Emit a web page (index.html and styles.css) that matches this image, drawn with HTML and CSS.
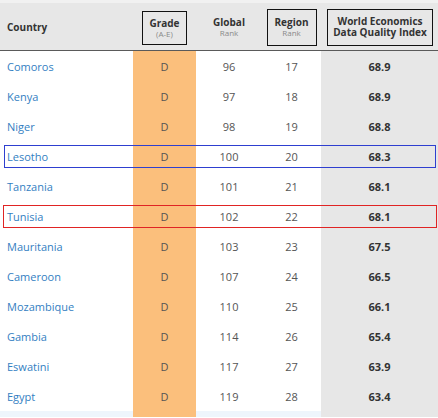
FILE: index.html
```html
<!DOCTYPE html>
<html>
<head>
<meta charset="utf-8">
<link rel="stylesheet" href="styles.css">
</head>
<body>
<div class="wrap">
<table class="rank">
  <colgroup>
    <col class="c-country"><col class="c-grade"><col class="c-global"><col class="c-region"><col class="c-index">
  </colgroup>
  <thead>
    <tr>
      <th class="th-country">Country</th>
      <th><span class="hbox hb-grade">Grade<small>(A-E)</small></span></th>
      <th><span class="hplain">Global<small>Rank</small></span></th>
      <th><span class="hbox hb-region">Region<small>Rank</small></span></th>
      <th><span class="hbox hb-index"><span class="ln">World Economics</span><span class="ln">Data Quality Index</span></span></th>
    </tr>
  </thead>
  <tbody>
    <tr><td class="country">Comoros</td><td class="grade">D</td><td>96</td><td>17</td><td class="score">68.9</td></tr>
    <tr><td class="country">Kenya</td><td class="grade">D</td><td>97</td><td>18</td><td class="score">68.9</td></tr>
    <tr><td class="country">Niger</td><td class="grade">D</td><td>98</td><td>19</td><td class="score">68.8</td></tr>
    <tr><td class="country">Lesotho</td><td class="grade">D</td><td>100</td><td>20</td><td class="score">68.3</td></tr>
    <tr><td class="country">Tanzania</td><td class="grade">D</td><td>101</td><td>21</td><td class="score">68.1</td></tr>
    <tr><td class="country">Tunisia</td><td class="grade">D</td><td>102</td><td>22</td><td class="score">68.1</td></tr>
    <tr><td class="country">Mauritania</td><td class="grade">D</td><td>103</td><td>23</td><td class="score">67.5</td></tr>
    <tr><td class="country">Cameroon</td><td class="grade">D</td><td>107</td><td>24</td><td class="score">66.5</td></tr>
    <tr><td class="country">Mozambique</td><td class="grade">D</td><td>110</td><td>25</td><td class="score">66.1</td></tr>
    <tr><td class="country">Gambia</td><td class="grade">D</td><td>114</td><td>26</td><td class="score">65.4</td></tr>
    <tr><td class="country">Eswatini</td><td class="grade">D</td><td>117</td><td>27</td><td class="score">63.9</td></tr>
    <tr><td class="country">Egypt</td><td class="grade">D</td><td>119</td><td>28</td><td class="score">63.4</td></tr>
    <tr class="next"><td></td><td class="grade"></td><td></td><td></td><td class="score"></td></tr>
  </tbody>
</table>
<div class="mark mark-blue"></div>
<div class="mark mark-red"></div>
</div>
</body>
</html>
```
FILE: styles.css
```css
html, body {
  margin: 0;
  padding: 0;
  background: #fff;
}
body {
  font-family: "Open Sans", "Noto Sans", sans-serif;
  width: 438px;
  height: 418px;
  overflow: hidden;
}
.wrap {
  position: relative;
  width: 438px;
}
.rank {
  border-collapse: collapse;
  table-layout: fixed;
  width: 438px;
}
.c-country { width: 133px; }
.c-grade { width: 63px; }
.c-global { width: 66px; }
.c-region { width: 59px; }
.c-index { width: 117px; }

thead tr {
  background: #e7e7e7;
  height: 49px;
  border-top: 3px solid #f1f1f1;
  border-bottom: 1px solid #5a5a5a;
}
th {
  padding: 0;
  font-size: 10px;
  font-weight: 700;
  color: #333;
  text-align: center;
  vertical-align: middle;
  line-height: 11px;
}
th.th-country {
  text-align: left;
  padding-left: 7px;
  padding-top: 2px;
}
th small {
  display: block;
  font-size: 8px;
  font-weight: 400;
  color: #8a8a8a;
  line-height: 10px;
}
.ln {
  display: block;
  line-height: 11px;
  white-space: nowrap;
}
.hplain {
  display: inline-block;
  padding-top: 1px;
}
.hbox {
  display: inline-block;
  box-sizing: border-box;
  border: 1.5px solid #111;
}
.hb-grade { width: 45px; height: 34px; margin-top: 2px; padding-top: 6px; }
.hb-region { width: 50px; height: 37px; margin-top: 1px; padding-top: 7px; }
.hb-index { width: 106px; height: 37px; margin-top: 1px; padding-top: 6px; margin-left: 1px; }

td {
  height: 30px;
  padding: 0;
  font-size: 11px;
  color: #555;
  text-align: center;
  vertical-align: middle;
}
td.country {
  text-align: left;
  padding-left: 7px;
  color: #3380c2;
}
td.grade {
  background: #fbbf7c;
  color: #555;
}
td.score {
  background: #e7e7e7;
  font-weight: 700;
  color: #333;
}
tr.next td {
  height: 6px;
  background: #eef5fc;
}
tr.next td.grade { background: #fbbf7c; }
tr.next td.score { background: #e7e7e7; }

.mark {
  position: absolute;
  box-sizing: border-box;
  height: 23px;
}
.mark-blue {
  left: 4px;
  width: 432px;
  top: 145px;
  border: 1px solid #2e3fd0;
}
.mark-red {
  left: 3px;
  width: 434px;
  top: 205px;
  border: 1px solid #e02424;
}
```
